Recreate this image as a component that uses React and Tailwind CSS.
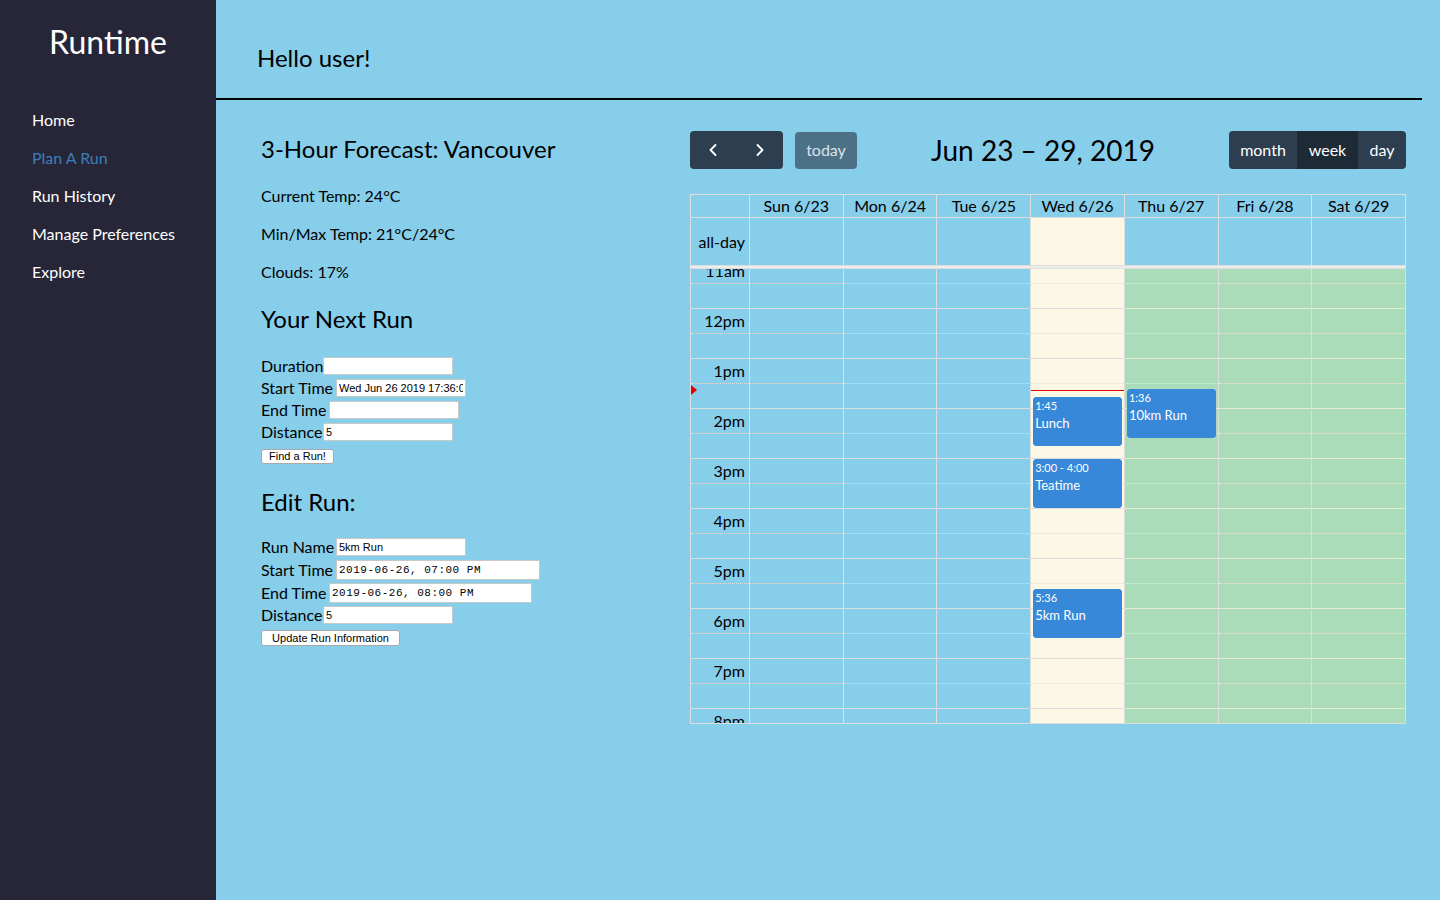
import React from 'react';
import { ChevronLeft, ChevronRight } from 'lucide-react';

const font = { fontFamily: 'Lato, "Open Sans", sans-serif' };

const navItems = [
  { label: 'Home' },
  { label: 'Plan A Run', active: true },
  { label: 'Run History' },
  { label: 'Manage Preferences' },
  { label: 'Explore' },
];

const days = [
  { label: 'Sun 6/23', body: '', allDay: '' },
  { label: 'Mon 6/24', body: '', allDay: '' },
  { label: 'Tue 6/25', body: '', allDay: '' },
  { label: 'Wed 6/26', body: 'bg-[#fdf7e6]', allDay: 'bg-[#fdf7e6]', today: true },
  { label: 'Thu 6/27', body: 'bg-[#aadcba]', allDay: '', green: true },
  { label: 'Fri 6/28', body: 'bg-[#aadcba]', allDay: '', green: true },
  { label: 'Sat 6/29', body: 'bg-[#aadcba]', allDay: '', green: true },
];

// minutes from midnight
const events = [
  { day: 3, start: 13 * 60 + 45, end: 14 * 60 + 45, time: '1:45', title: 'Lunch' },
  { day: 3, start: 15 * 60, end: 16 * 60, time: '3:00 - 4:00', title: 'Teatime' },
  { day: 3, start: 17 * 60 + 36, end: 18 * 60 + 36, time: '5:36', title: '5km Run' },
  { day: 4, start: 13 * 60 + 36, end: 14 * 60 + 36, time: '1:36', title: '10km Run' },
];

const SLOT = 25;
const GRID_START = 11 * 60;
const slots = Array.from({ length: 20 }, (_, i) => i);
const hourLabel = (i) => {
  const h = 11 + Math.floor(i / 2);
  if (h === 12) return '12pm';
  return h < 12 ? `${h}am` : `${h - 12}pm`;
};
const toY = (min) => ((min - GRID_START) / 30) * SLOT;
const nowY = toY(13 * 60 + 38);

function Sidebar() {
  return (
    <aside className="w-[216px] shrink-0 bg-[#262638] text-white">
      <div className="pt-[22px] text-center text-[32px] leading-[40px]">Runtime</div>
      <nav className="mt-[39px] flex flex-col">
        {navItems.map((item) => (
          <a
            key={item.label}
            href="#"
            className={
              'pl-[32px] h-[38px] flex items-center text-[16px] ' +
              (item.active ? 'text-[#3d7fb8]' : 'text-white')
            }
          >
            {item.label}
          </a>
        ))}
      </nav>
    </aside>
  );
}

function Field({ label, labelW, inputW, value = '', mono, h = 'h-[18px]', rowH = 'h-[22px]' }) {
  return (
    <div className={'flex items-center ' + rowH}>
      <span className="shrink-0 whitespace-nowrap text-[16px] leading-none" style={{ width: labelW }}>
        {label}
      </span>
      <input
        defaultValue={value}
        className={
          'shrink-0 border border-[#c8c8c8] bg-white px-[2px] text-black outline-none ' +
          h +
          ' ' +
          (mono
            ? 'text-[11px] font-["Liberation_Mono",monospace] tracking-[0.5px]'
            : 'text-[11px] font-["Liberation_Sans",Arial,sans-serif]')
        }
        style={{ width: inputW }}
      />
    </div>
  );
}

function SmallButton({ children, className = '' }) {
  return (
    <button
      className={
        'block rounded-[3px] border border-[#a9a9a9] bg-white text-center text-[11px] leading-none text-black font-["Liberation_Sans",Arial,sans-serif] ' +
        className
      }
    >
      {children}
    </button>
  );
}

function LeftPanel() {
  return (
    <div className="w-[474px] shrink-0 pl-[45px] text-black">
      <h2 className="mt-[33px] text-[24px] leading-[32px]">3-Hour Forecast: Vancouver</h2>
      <p className="mt-[19px] text-[16px] leading-[24px]">Current Temp: 24°C</p>
      <p className="mt-[14px] text-[16px] leading-[24px]">Min/Max Temp: 21°C/24°C</p>
      <p className="mt-[14px] text-[16px] leading-[24px]">Clouds: 17%</p>

      <h2 className="mt-[19px] text-[24px] leading-[32px]">Your Next Run</h2>
      <div className="mt-[20px]">
        <Field label="Duration" labelW={62} inputW={130} />
        <Field label="Start Time" labelW={75} inputW={130} value="Wed Jun 26 2019 17:36:00" />
        <Field label="End Time" labelW={68} inputW={130} />
        <Field label="Distance" labelW={62} inputW={130} value="5" />
        <SmallButton className="mt-[6px] h-[15px] w-[73px]">Find a Run!</SmallButton>
      </div>

      <h2 className="mt-[22px] text-[24px] leading-[32px]">Edit Run:</h2>
      <div className="mt-[18px]">
        <Field label="Run Name" labelW={75} inputW={130} value="5km Run" />
        <Field label="Start Time" labelW={75} inputW={204} value="2019-06-26, 07:00 PM" mono h="h-[20px]" rowH="h-[23px]" />
        <Field label="End Time" labelW={68} inputW={203} value="2019-06-26, 08:00 PM" mono h="h-[20px]" rowH="h-[23px]" />
        <Field label="Distance" labelW={62} inputW={130} value="5" />
        <SmallButton className="mt-[4px] h-[16px] w-[139px]">Update Run Information</SmallButton>
      </div>
    </div>
  );
}

function Toolbar() {
  return (
    <div className="flex h-[38px] items-center justify-between">
      <div className="flex items-center">
        <div className="flex h-[38px] overflow-hidden rounded-[4px] bg-[#2c3e50]">
          <button className="flex w-[46px] items-center justify-center text-white">
            <ChevronLeft size={20} strokeWidth={2.2} />
          </button>
          <button className="flex w-[47px] items-center justify-center text-white">
            <ChevronRight size={20} strokeWidth={2.2} />
          </button>
        </div>
        <button className="ml-[12px] h-[37px] w-[62px] rounded-[4px] bg-[#4c7086] text-[16px] text-[#dbe4ea]">
          today
        </button>
      </div>
      <h2 className="text-[28px] leading-none text-black">Jun 23 – 29, 2019</h2>
      <div className="flex h-[38px] overflow-hidden rounded-[4px] bg-[#2c3e50] text-[16px] text-white">
        <button className="w-[68px]">month</button>
        <button className="w-[61px] bg-[#1e2a36]">week</button>
        <button className="w-[48px]">day</button>
      </div>
    </div>
  );
}

function Calendar() {
  return (
    <div className="mt-[31px] w-[716px] shrink-0 text-black">
      <Toolbar />
      <div className="mt-[25px] border border-[#dddddd]">
        {/* day header */}
        <div className="flex h-[22px] text-[16px] leading-[21px]">
          <div className="w-[58px] shrink-0" />
          {days.map((d) => (
            <div key={d.label} className="flex-1 border-l border-[#dddddd] text-center">
              {d.label}
            </div>
          ))}
        </div>
        {/* all-day row */}
        <div className="flex h-[48px] border-t border-[#dddddd]">
          <div className="flex w-[58px] shrink-0 items-center justify-end pr-[4px] text-[16px]">all-day</div>
          {days.map((d) => (
            <div key={d.label} className={'flex-1 border-l border-[#dddddd] ' + d.allDay} />
          ))}
        </div>
        <div className="h-[4px] border-y border-[#dddddd] bg-[#ececec]" />
        {/* time grid */}
        <div className="h-[454px] overflow-hidden">
          <div className="-mt-[11px] flex">
            <div className="relative w-[58px] shrink-0">
              {slots.map((i) => (
                <div
                  key={i}
                  className={
                    'flex h-[25px] items-center justify-end border-t border-[#dddddd] pr-[4px] text-[16px] ' +
                    (i % 2 === 1 ? 'border-dotted' : '')
                  }
                >
                  {i % 2 === 0 ? hourLabel(i) : ''}
                </div>
              ))}
              <div
                className="absolute left-0 h-0 w-0 border-y-[5px] border-l-[6px] border-y-transparent border-l-[#e00000]"
                style={{ top: nowY - 5 }}
              />
            </div>
            {days.map((d, di) => (
              <div key={d.label} className={'relative flex-1 border-l border-[#dddddd] ' + d.body}>
                {slots.map((i) => (
                  <div
                    key={i}
                    className={
                      'h-[25px] border-t ' +
                      (i % 2 === 1 ? 'border-dotted ' : '') +
                      (d.green ? 'border-[#e6ecd2]' : 'border-[#dddddd]')
                    }
                  />
                ))}
                {d.today && (
                  <div className="absolute left-0 right-0 border-t border-[#e00000]" style={{ top: nowY }} />
                )}
                {events
                  .filter((e) => e.day === di)
                  .map((e) => (
                    <div
                      key={e.title}
                      className="absolute left-[2px] right-[2px] overflow-hidden rounded-[3px] border border-[#3788d8] bg-[#3788d8] px-[1px] pt-[1px] text-white"
                      style={{ top: toY(e.start) + 1, height: toY(e.end) - toY(e.start) - 1 }}
                    >
                      <div className="text-[11px] leading-[14px]">{e.time}</div>
                      <div className="text-[13px] leading-[20px]">{e.title}</div>
                    </div>
                  ))}
              </div>
            ))}
          </div>
        </div>
      </div>
    </div>
  );
}

export default function App() {
  return (
    <div className="flex h-[900px] w-full overflow-hidden" style={font}>
      <Sidebar />
      <main className="flex-1 bg-[#87ceeb]">
        <div className="mr-[18px] border-b-2 border-black pb-[24px] pl-[41px] pt-[42px] text-[24px] leading-[32px] text-black">
          Hello user!
        </div>
        <div className="flex">
          <LeftPanel />
          <Calendar />
        </div>
      </main>
    </div>
  );
}
